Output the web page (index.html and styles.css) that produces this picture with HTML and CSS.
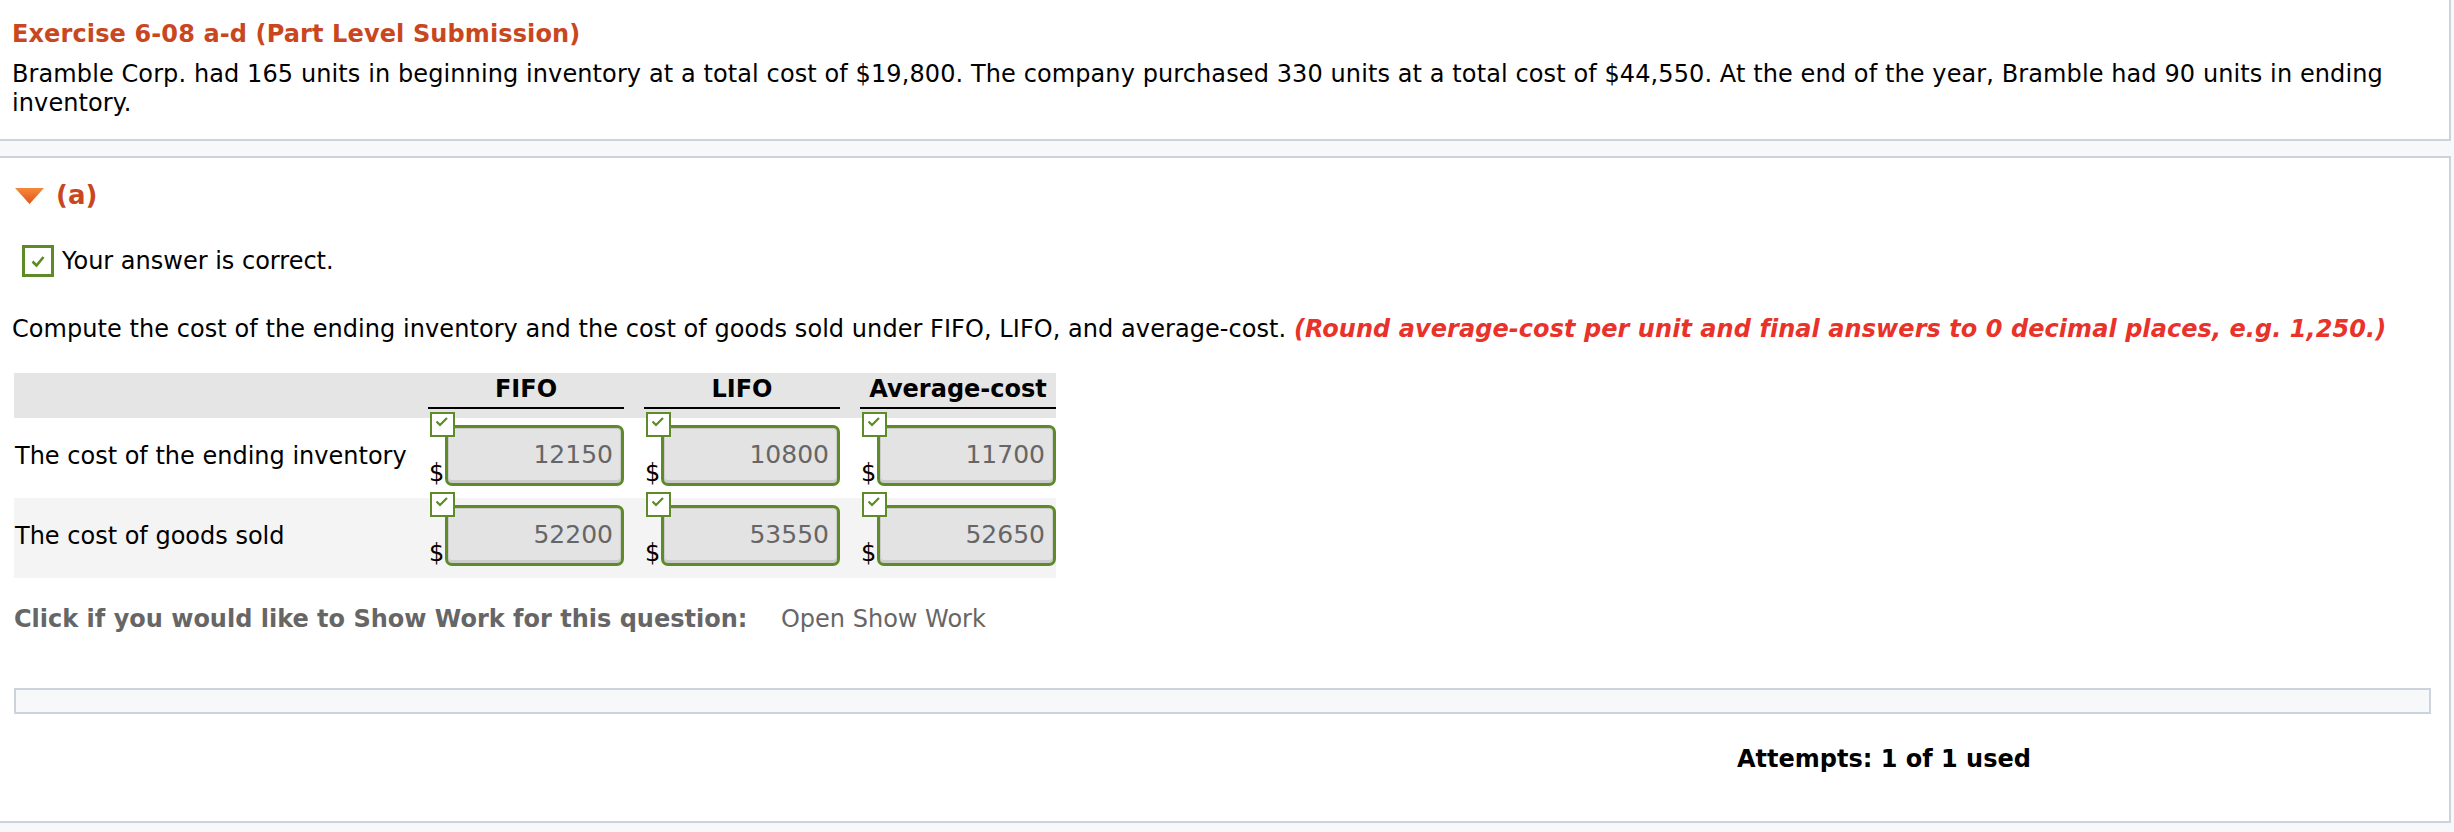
FILE: index.html
```html
<!DOCTYPE html>
<html>
<head>
<meta charset="utf-8">
<title>Exercise 6-08 a-d</title>
<link rel="stylesheet" href="styles.css">
</head>
<body>
<div class="page">
  <section class="panel panel-top">
    <h1 class="title">Exercise 6-08 a-d (Part Level Submission)</h1>
    <p class="intro">Bramble Corp. had 165 units in beginning inventory at a total cost of $19,800. The company purchased 330 units at a total cost of $44,550. At the end of the year, Bramble had 90 units in ending inventory.</p>
  </section>

  <section class="panel panel-part">
    <div class="part-head">
      <svg class="tri" width="29" height="16" viewBox="0 0 29 16">
        <defs>
          <linearGradient id="tg" x1="0" y1="0" x2="0" y2="1">
            <stop offset="0" stop-color="#f58a3a"/>
            <stop offset="1" stop-color="#e2521c"/>
          </linearGradient>
        </defs>
        <polygon points="0,0 29,0 14.5,16" fill="url(#tg)"/>
      </svg>
      <span class="part-label">(a)</span>
    </div>

    <div class="correct">
      <span class="bigcheck">
        <svg width="26" height="26" viewBox="0 0 26 26"><path d="M7.5 13.5 L11.5 17.5 L18.5 9" fill="none" stroke="#5c8a24" stroke-width="2.6"/></svg>
      </span>
      <span>Your answer is correct.</span>
    </div>

    <p class="question">Compute the cost of the ending inventory and the cost of goods sold under FIFO, LIFO, and average-cost. <em class="hint">(Round average-cost per unit and final answers to 0 decimal places, e.g. 1,250.)</em></p>

    <div class="table">
      <div class="trow thead">
        <div class="hcell blank"></div>
        <div class="hcell">FIFO</div>
        <div class="hcell">LIFO</div>
        <div class="hcell">Average-cost</div>
      </div>
      <div class="trow tdata">
        <div class="label">The cost of the ending inventory</div>
        <div class="cell">
          <span class="smallcheck"><svg width="21" height="21" viewBox="0 0 21 21"><path d="M4.5 7.5 L8 11 L15 4" fill="none" stroke="#5c8a24" stroke-width="2.2"/></svg></span>
          <span class="dollar">$</span><input class="amt" type="text" value="12150" readonly>
        </div>
        <div class="cell">
          <span class="smallcheck"><svg width="21" height="21" viewBox="0 0 21 21"><path d="M4.5 7.5 L8 11 L15 4" fill="none" stroke="#5c8a24" stroke-width="2.2"/></svg></span>
          <span class="dollar">$</span><input class="amt" type="text" value="10800" readonly>
        </div>
        <div class="cell">
          <span class="smallcheck"><svg width="21" height="21" viewBox="0 0 21 21"><path d="M4.5 7.5 L8 11 L15 4" fill="none" stroke="#5c8a24" stroke-width="2.2"/></svg></span>
          <span class="dollar">$</span><input class="amt" type="text" value="11700" readonly>
        </div>
      </div>
      <div class="trow tdata alt">
        <div class="label">The cost of goods sold</div>
        <div class="cell">
          <span class="smallcheck"><svg width="21" height="21" viewBox="0 0 21 21"><path d="M4.5 7.5 L8 11 L15 4" fill="none" stroke="#5c8a24" stroke-width="2.2"/></svg></span>
          <span class="dollar">$</span><input class="amt" type="text" value="52200" readonly>
        </div>
        <div class="cell">
          <span class="smallcheck"><svg width="21" height="21" viewBox="0 0 21 21"><path d="M4.5 7.5 L8 11 L15 4" fill="none" stroke="#5c8a24" stroke-width="2.2"/></svg></span>
          <span class="dollar">$</span><input class="amt" type="text" value="53550" readonly>
        </div>
        <div class="cell">
          <span class="smallcheck"><svg width="21" height="21" viewBox="0 0 21 21"><path d="M4.5 7.5 L8 11 L15 4" fill="none" stroke="#5c8a24" stroke-width="2.2"/></svg></span>
          <span class="dollar">$</span><input class="amt" type="text" value="52650" readonly>
        </div>
      </div>
    </div>

    <div class="showwork">
      <span class="sw-label">Click if you would like to Show Work for this question:</span>
      <span class="sw-link">Open Show Work</span>
    </div>

    <div class="workbox"></div>

    <div class="attempts">Attempts: 1 of 1 used</div>
  </section>
</div>
</body>
</html>
```

FILE: styles.css
```css
html, body {
  margin: 0;
  padding: 0;
  background: #f6f8fa;
}
body {
  font-family: "DejaVu Sans", Verdana, sans-serif;
  font-size: 24px;
  line-height: 28px;
  color: #000;
}
.page {
  width: 2451px;
}
.panel {
  background: #fff;
  border-right: 2px solid #ccd3dc;
  border-bottom: 2px solid #ccd3dc;
  padding-left: 12px;
}
.panel-top {
  padding-top: 20px;
  padding-bottom: 21px;
  padding-right: 20px;
}
.title {
  margin: 0;
  font-size: 24px;
  line-height: 28px;
  font-weight: bold;
  color: #c9471f;
  letter-spacing: 0.12px;
}
.intro {
  margin: 12px 0 0 0;
  line-height: 29px;
  letter-spacing: 0.1px;
}
.panel-part {
  margin-top: 15px;
  border-top: 2px solid #ccd3dc;
  padding-top: 23px;
  padding-bottom: 48px;
  padding-right: 18px;
}
.part-head {
  display: flex;
  align-items: center;
  height: 28px;
}
.tri {
  margin-left: 3px;
  margin-top: 2px;
}
.part-label {
  margin-left: 12px;
  font-size: 26px;
  font-weight: bold;
  color: #c9471f;
}
.correct {
  display: flex;
  align-items: center;
  margin-top: 36px;
  height: 32px;
}
.bigcheck {
  box-sizing: border-box;
  width: 32px;
  height: 32px;
  margin-left: 10px;
  border: 3px solid #5f8a28;
  background: #fff;
  display: flex;
  align-items: center;
  justify-content: center;
}
.correct > span:last-child {
  margin-left: 8px;
}
.question {
  margin: 38px 0 0 0;
  letter-spacing: 0.06px;
}
.hint {
  font-weight: bold;
  font-style: italic;
  color: #e8322a;
}
.table {
  margin-top: 30px;
  margin-left: 2px;
  width: 1042px;
}
.trow {
  display: grid;
  grid-template-columns: 394px 196px 196px 196px;
  column-gap: 20px;
}
.thead {
  background: #e5e5e5;
  height: 45px;
}
.hcell {
  box-sizing: border-box;
  height: 36px;
  padding-top: 2px;
  text-align: center;
  font-weight: bold;
  border-bottom: 2px solid #000;
}
.hcell.blank {
  border-bottom: none;
}
.tdata {
  height: 80px;
  background: #fff;
}
.tdata.alt {
  background: #f4f4f4;
}
.label {
  align-self: center;
  padding-left: 1px;
  padding-bottom: 4px;
  white-space: nowrap;
}
.cell {
  position: relative;
  display: flex;
  align-items: flex-end;
  padding-top: 7px;
  padding-bottom: 12px;
}
.dollar {
  width: 16px;
  padding-left: 1px;
  line-height: 20px;
  padding-bottom: 3px;
}
.amt {
  box-sizing: border-box;
  width: 179px;
  height: 61px;
  margin: 0;
  border: 3px solid #5f8a28;
  border-radius: 7px;
  background: #e3e3e3;
  box-shadow: inset 0 0 0 1px #cccccc, inset 0 -2px 0 1px #cccccc;
  font-family: "DejaVu Sans", Verdana, sans-serif;
  font-size: 25px;
  color: #666;
  text-align: right;
  padding: 0 8px 2px 0;
  outline: none;
}
.smallcheck {
  position: absolute;
  left: 2px;
  top: -6px;
  box-sizing: border-box;
  width: 25px;
  height: 25px;
  border: 2px solid #5f8a28;
  background: #fff;
  display: flex;
  align-items: center;
  justify-content: center;
  z-index: 1;
}
.showwork {
  margin-top: 27px;
  margin-left: 2px;
  color: #666;
}
.sw-label {
  font-weight: bold;
}
.sw-link {
  margin-left: 26px;
}
.workbox {
  margin-top: 55px;
  margin-left: 2px;
  height: 26px;
  box-sizing: border-box;
  border: 2px solid #ccd3dc;
  background: #f6f8fa;
}
.attempts {
  margin-top: 31px;
  margin-left: 1725px;
  font-weight: bold;
}
```
